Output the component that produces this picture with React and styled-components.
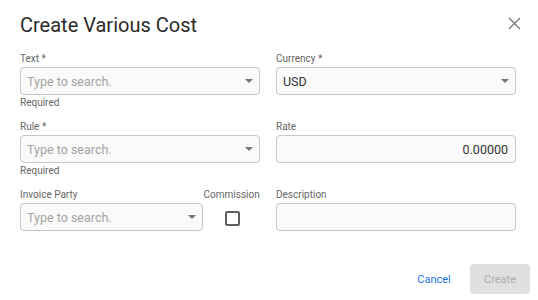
import React from "react";
import styled, { createGlobalStyle } from "styled-components";

const GlobalStyle = createGlobalStyle`
  html, body { margin: 0; padding: 0; background: #ffffff; }
  body { font-family: Roboto, "Liberation Sans", Arial, sans-serif; }
  * { box-sizing: border-box; }
`;

const Dialog = styled.div`
  width: 538px;
  height: 300px;
  background: #ffffff;
  display: flex;
  flex-direction: column;
`;

const Header = styled.div`
  display: flex;
  justify-content: space-between;
  align-items: flex-start;
  padding: 13px 12px 0 20px;
`;

const Title = styled.h2`
  margin: 0;
  font-size: 20px;
  line-height: 24px;
  font-weight: 400;
  color: #2b2b2b;
`;

const CloseButton = styled.button`
  width: 24px;
  height: 24px;
  margin-top: -2px;
  padding: 0;
  border: none;
  background: transparent;
  display: flex;
  align-items: center;
  justify-content: center;
  cursor: pointer;
`;

const Form = styled.div`
  display: grid;
  grid-template-columns: 240px 240px;
  column-gap: 16px;
  row-gap: 12px;
  align-items: start;
  margin-top: 16px;
  padding-left: 20px;
`;

const Field = styled.div`
  display: flex;
  flex-direction: column;
  width: ${(p) => p.$width || "auto"};
  align-items: ${(p) => (p.$center ? "center" : "stretch")};
`;

const Label = styled.label`
  font-size: 10px;
  line-height: 12px;
  color: #666666;
  margin-bottom: 2px;
  white-space: nowrap;
`;

const InputBox = styled.div`
  position: relative;
  height: 28px;
  border: 1px solid #c6c6c6;
  border-radius: 4px;
  background: #fafafa;
  display: flex;
  align-items: center;
  justify-content: ${(p) => (p.$right ? "flex-end" : "flex-start")};
  padding: 0 ${(p) => (p.$select ? "22px" : "7px")} 0 6px;
  font-size: 12.5px;
  color: ${(p) => (p.$placeholder ? "#a3a3a3" : "#333333")};
`;

const Arrow = styled.span`
  position: absolute;
  right: 6px;
  top: 50%;
  margin-top: -2px;
  width: 0;
  height: 0;
  border-left: 4px solid transparent;
  border-right: 4px solid transparent;
  border-top: 4px solid #757575;
`;

const Helper = styled.div`
  font-size: 10px;
  line-height: 12px;
  color: #666666;
  margin-top: 2px;
`;

const SplitCell = styled.div`
  display: flex;
`;

const Checkbox = styled.span`
  width: 15px;
  height: 15px;
  border: 2px solid #5f5f5f;
  border-radius: 2px;
  margin-top: 8px;
  margin-left: 1px;
`;

const Footer = styled.div`
  display: flex;
  justify-content: flex-end;
  gap: 6px;
  padding-right: 8px;
  margin-top: 33px;
`;

const Button = styled.button`
  min-width: 60px;
  height: 30px;
  border: none;
  border-radius: 4px;
  font-family: inherit;
  font-size: 11px;
  padding: 0 8px;
  background: ${(p) => (p.$disabled ? "#e0e0e0" : "transparent")};
  color: ${(p) => (p.$disabled ? "#acacac" : "#1a73e8")};
`;

function SelectField({ label, value, placeholder, helper, width }) {
  return (
    <Field $width={width}>
      <Label>{label}</Label>
      <InputBox $select $placeholder={!value}>
        {value || placeholder}
        <Arrow />
      </InputBox>
      {helper ? <Helper>{helper}</Helper> : null}
    </Field>
  );
}

export default function App() {
  return (
    <>
      <GlobalStyle />
      <Dialog>
        <Header>
          <Title>Create Various Cost</Title>
          <CloseButton aria-label="Close">
            <svg width="13" height="13" viewBox="0 0 13 13">
              <path d="M1 1 L12 12 M12 1 L1 12" stroke="#757575" strokeWidth="1.3" fill="none" />
            </svg>
          </CloseButton>
        </Header>
        <Form>
          <SelectField label="Text *" placeholder="Type to search." helper="Required" />
          <SelectField label="Currency *" value="USD" />
          <SelectField label="Rule *" placeholder="Type to search." helper="Required" />
          <Field>
            <Label>Rate</Label>
            <InputBox $right>0.00000</InputBox>
          </Field>
          <SplitCell>
            <SelectField label="Invoice Party" placeholder="Type to search." width="184px" />
            <Field $width="57px" $center>
              <Label>Commission</Label>
              <Checkbox />
            </Field>
          </SplitCell>
          <Field>
            <Label>Description</Label>
            <InputBox />
          </Field>
        </Form>
        <Footer>
          <Button>Cancel</Button>
          <Button $disabled disabled>Create</Button>
        </Footer>
      </Dialog>
    </>
  );
}
